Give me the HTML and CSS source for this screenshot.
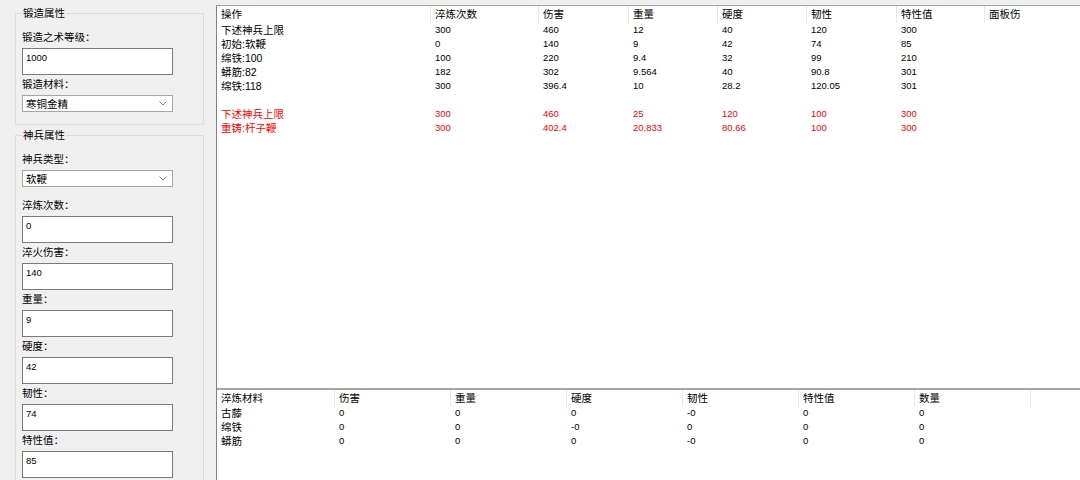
FILE: index.html
```html
<!DOCTYPE html>
<html lang="zh-CN">
<head>
  <meta charset="UTF-8">
  <title>神兵锻造</title>
  <link rel="stylesheet" href="styles.css">
</head>
<body>
  <div class="window">
    <aside class="side">
      <fieldset class="group">
        <legend>锻造属性</legend>
        <div class="field-label">锻造之术等级：</div>
        <div class="textbox">1000</div>
        <div class="field-label">锻造材料：</div>
        <div class="combo">寒铜金精
          <svg class="combo-arrow" width="8" height="5" viewBox="0 0 8 5"><path d="M0.5 0.5 L4 4 L7.5 0.5" fill="none" stroke="#8c8c8c" stroke-width="1"/></svg>
        </div>
      </fieldset>

      <fieldset class="group">
        <legend>神兵属性</legend>
        <div class="field-label">神兵类型：</div>
        <div class="combo">软鞭
          <svg class="combo-arrow" width="8" height="5" viewBox="0 0 8 5"><path d="M0.5 0.5 L4 4 L7.5 0.5" fill="none" stroke="#8c8c8c" stroke-width="1"/></svg>
        </div>
        <div class="field-label">淬炼次数：</div>
        <div class="textbox">0</div>
        <div class="field-label">淬火伤害：</div>
        <div class="textbox">140</div>
        <div class="field-label">重量：</div>
        <div class="textbox">9</div>
        <div class="field-label">硬度：</div>
        <div class="textbox">42</div>
        <div class="field-label">韧性：</div>
        <div class="textbox">74</div>
        <div class="field-label">特性值：</div>
        <div class="textbox">85</div>
      </fieldset>
    </aside>

    <main class="lists">
      <div class="listview result-list">
        <div class="lv-head">
          <div>操作</div><div>淬炼次数</div><div>伤害</div><div>重量</div>
          <div>硬度</div><div>韧性</div><div>特性值</div><div>面板伤</div>
        </div>
        <div class="lv-row">
          <div>下述神兵上限</div><div>300</div><div>460</div><div>12</div><div>40</div><div>120</div><div>300</div><div></div>
        </div>
        <div class="lv-row">
          <div>初始:软鞭</div><div>0</div><div>140</div><div>9</div><div>42</div><div>74</div><div>85</div><div></div>
        </div>
        <div class="lv-row">
          <div>绵铁:100</div><div>100</div><div>220</div><div>9.4</div><div>32</div><div>99</div><div>210</div><div></div>
        </div>
        <div class="lv-row">
          <div>蟒筋:82</div><div>182</div><div>302</div><div>9.564</div><div>40</div><div>90.8</div><div>301</div><div></div>
        </div>
        <div class="lv-row">
          <div>绵铁:118</div><div>300</div><div>396.4</div><div>10</div><div>28.2</div><div>120.05</div><div>301</div><div></div>
        </div>
        <div class="lv-row"></div>
        <div class="lv-row red">
          <div>下述神兵上限</div><div>300</div><div>460</div><div>25</div><div>120</div><div>100</div><div>300</div><div></div>
        </div>
        <div class="lv-row red">
          <div>重铸:杆子鞭</div><div>300</div><div>402.4</div><div>20.833</div><div>80.66</div><div>100</div><div>300</div><div></div>
        </div>
      </div>

      <div class="listview material-list">
        <div class="lv-head">
          <div>淬炼材料</div><div>伤害</div><div>重量</div><div>硬度</div>
          <div>韧性</div><div>特性值</div><div>数量</div><div></div>
        </div>
        <div class="lv-row">
          <div>古藤</div><div>0</div><div>0</div><div>0</div><div>-0</div><div>0</div><div>0</div><div></div>
        </div>
        <div class="lv-row">
          <div>绵铁</div><div>0</div><div>0</div><div>-0</div><div>0</div><div>0</div><div>0</div><div></div>
        </div>
        <div class="lv-row">
          <div>蟒筋</div><div>0</div><div>0</div><div>0</div><div>-0</div><div>0</div><div>0</div><div></div>
        </div>
      </div>
    </main>
  </div>
</body>
</html>
```

FILE: styles.css
```css
body {
  margin: 0;
  padding: 0;
  background-color: #f0f0f0;
  font-family: "Liberation Sans", "Noto Sans CJK SC", sans-serif;
  font-size: 10.5px;
  color: #000;
  overflow: hidden;
}

.window {
  display: flex;
  height: 480px;
}

/* left side: group boxes */
.side {
  flex: 0 0 216px;
  padding-top: 6px;
}

.group {
  box-sizing: border-box;
  width: 189px;
  min-width: 0;
  margin: 0 0 0 15px;
  padding: 8px 0 12px 6px;
  border: 1px solid #dcdcdc;
}

.group + .group {
  margin-top: 3px;
}

.group legend {
  padding: 0 1px;
  line-height: 14px;
}

.field-label {
  line-height: 14px;
  margin: 2px 0 4px;
}

.textbox {
  box-sizing: border-box;
  width: 151px;
  height: 27px;
  padding: 3px 3px;
  font-size: 9.5px;
  line-height: 12px;
  background-color: #fff;
  border: 1px solid #7a7a7a;
}

.combo {
  box-sizing: border-box;
  display: flex;
  align-items: center;
  justify-content: space-between;
  width: 151px;
  height: 17px;
  padding: 0 4px 0 3px;
  background-color: #fff;
  border: 1px solid #a6a6a6;
}

.combo + .field-label {
  margin-top: 11px;
}

.combo-arrow {
  margin-right: 1px;
}

/* right side: list views */
.lists {
  flex: 1;
  min-width: 0;
  margin-top: 5px;
  display: flex;
  flex-direction: column;
  background-color: #fff;
  border-top: 1px solid #a0a0a0;
  border-left: 1px solid #828282;
  overflow: hidden;
}

.result-list {
  flex: 1;
}

.material-list {
  flex: 0 0 92px;
  box-sizing: border-box;
  border-top: 2px solid #a5a5a5;
}

.lv-head,
.lv-row {
  display: grid;
}

.result-list .lv-head,
.result-list .lv-row {
  grid-template-columns: 214px 108px 90px 89px 89px 90px 88px 120px;
}

.material-list .lv-head,
.material-list .lv-row {
  grid-template-columns: 118px 116px 116px 116px 116px 116px 116px 60px;
}

.lv-head {
  height: 17px;
  line-height: 17px;
}

.material-list .lv-head {
  height: 16px;
  line-height: 16px;
}

.lv-head > div {
  box-sizing: border-box;
  padding-left: 4px;
  border-right: 1px solid #e5e5e5;
  white-space: nowrap;
}

.lv-head > div:last-child {
  border-right: none;
}

.lv-row {
  height: 14px;
  line-height: 14px;
}

.lv-row > div {
  padding-left: 4px;
  white-space: nowrap;
}

/* number columns use the smaller list font */
.lv-row > div + div {
  font-size: 9.5px;
}

.lv-row.red {
  color: #ff0000;
}
```
